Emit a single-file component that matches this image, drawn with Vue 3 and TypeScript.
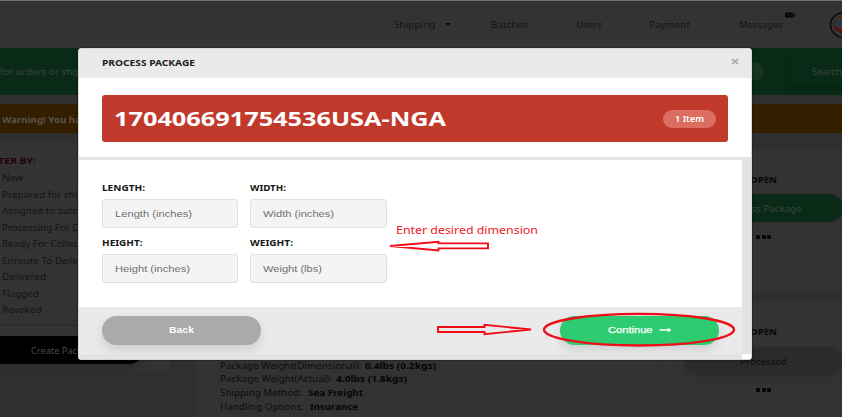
<script setup lang="ts">
import type { Directive } from 'vue'

interface Spec { label: string; labelWidth: number; gap: number; value: string; valueWidth: number }

// Stretches a run of text horizontally to the given advance width.
const vFit: Directive<HTMLElement, number> = {
  mounted(el, binding) {
    const natural = el.getBoundingClientRect().width
    if (!natural) return
    el.style.transform = `scaleX(${binding.value / natural})`
    el.style.marginRight = `${binding.value - natural}px`
  },
}

const filters = [
  { name: 'New', width: 21 },
  { name: 'Prepared for ship', width: 81.5 },
  { name: 'Assigned to batch', width: 81 },
  { name: 'Processing For De', width: 83 },
  { name: 'Ready For Collect', width: 79.5 },
  { name: 'Enroute To Delive', width: 81.5 },
  { name: 'Delivered', width: 44 },
  { name: 'Flagged', width: 37 },
  { name: 'Revoked', width: 40 },
]

const specs: Spec[] = [
  { label: 'Package Weight(Dimensional):', labelWidth: 141, gap: 4, value: '0.4lbs (0.2kgs)', valueWidth: 71 },
  { label: 'Package Weight(Actual):', labelWidth: 112, gap: 4, value: '4.0lbs (1.8kgs)', valueWidth: 71 },
  { label: 'Shipping Method:', labelWidth: 82, gap: 6, value: 'Sea Freight', valueWidth: 55 },
  { label: 'Handling Options:', labelWidth: 84, gap: 6, value: 'Insurance', valueWidth: 48 },
]

const fields = [
  { label: 'LENGTH:', labelWidth: 43, hint: 'Length (inches)', hintWidth: 77 },
  { label: 'WIDTH:', labelWidth: 36, hint: 'Width (inches)', hintWidth: 71 },
  { label: 'HEIGHT:', labelWidth: 40.5, hint: 'Height (inches)', hintWidth: 75 },
  { label: 'WEIGHT:', labelWidth: 43, hint: 'Weight (lbs)', hintWidth: 59 },
]
</script>

<template>
  <div class="screen">
    <header class="nav">
      <span class="nav-item shipping"><span v-fit="41.5" class="t">Shipping</span><i class="caret"></i></span>
      <span class="nav-item batches"><span v-fit="37" class="t">Batches</span></span>
      <span class="nav-item users"><span v-fit="26" class="t">Users</span></span>
      <span class="nav-item payment"><span v-fit="41" class="t">Payment</span></span>
      <span class="nav-item messages">
        <span v-fit="44" class="t">Messages</span>
        <svg class="mail" width="12" height="6" viewBox="0 0 12 6">
          <rect x="0" y="0.5" width="8.5" height="5" rx="0.6" fill="#050505" />
          <path d="M0 1.6 L4.2 3.6 L8.5 1.6" fill="none" stroke="#2c2c2c" stroke-width="0.6" />
          <path d="M10.2 0.7 V4.8" stroke="#111" stroke-width="1" />
        </svg>
      </span>
      <svg class="logo" width="13" height="28" viewBox="0 0 13 28">
        <ellipse cx="16" cy="14" rx="15.5" ry="13" fill="#343434" stroke="#050505" stroke-width="1.3" />
        <path d="M4 15 C5 9 8 5 14 3" fill="none" stroke="#48201f" stroke-width="1" />
        <path d="M4 15 L8 17 L13 20 V23 L7 19.5 L4 18Z" fill="#5c0d10" />
        <text x="6.2" y="14" class="logo-text">W</text>
      </svg>
    </header>

    <section class="searchbar">
      <span class="query"><span v-fit="81" class="t">for orders or ship</span></span>
      <span class="toggle"></span>
      <span class="search-btn"><span v-fit="30" class="t">Search</span></span>
    </section>

    <div class="alert"><span v-fit="79" class="t">Warning! You ha</span></div>

    <main class="columns">
      <aside class="sidebar">
        <div class="filters">
          <h3><span v-fit="53" class="t">FILTER BY:</span></h3>
          <ul>
            <li v-for="f in filters" :key="f.name"><span v-fit="f.width" class="t">{{ f.name }}</span></li>
          </ul>
        </div>
        <div class="create"><span v-fit="67" class="t">Create Package</span></div>
      </aside>
      <section class="detail">
        <p v-for="s in specs" :key="s.label">
          <span v-fit="s.labelWidth" class="t">{{ s.label }}</span>
          <b :style="{ marginLeft: s.gap + 'px' }"><span v-fit="s.valueWidth" class="t">{{ s.value }}</span></b>
        </p>
      </section>
      <aside class="actions">
        <div class="order first">
          <h4><span v-fit="27" class="t">OPEN</span></h4>
          <div class="pill go"><span v-fit="77" class="t">Process Package</span></div>
          <div class="dots"><i></i><i></i><i></i></div>
        </div>
        <div class="order">
          <h4><span v-fit="27" class="t">OPEN</span></h4>
          <div class="pill"><span v-fit="47" class="t">Processed</span></div>
          <div class="dots"><i></i><i></i><i></i></div>
        </div>
      </aside>
    </main>

    <div class="modal">
      <div class="modal-head">
        <span v-fit="93" class="t">PROCESS PACKAGE</span>
        <svg width="8" height="7" viewBox="0 0 8 7"><path d="M1 1 L7 6 M7 1 L1 6" stroke="#b0b0b0" stroke-width="2" /></svg>
      </div>
      <div class="banner-wrap">
        <div class="banner">
          <span v-fit="332" class="t number">170406691754536USA-NGA</span>
          <span class="badge"><span v-fit="29" class="t">1 Item</span></span>
        </div>
      </div>
      <div class="scroll">
        <div class="view">
          <div class="form">
            <label v-for="f in fields" :key="f.label">
              <span class="caption"><span v-fit="f.labelWidth" class="t">{{ f.label }}</span></span>
              <span class="input"><span v-fit="f.hintWidth" class="t">{{ f.hint }}</span></span>
            </label>
          </div>
          <div class="foot">
            <button class="btn back"><span v-fit="25" class="t">Back</span></button>
            <button class="btn next">
              <span v-fit="44.5" class="t">Continue</span>
              <svg width="13" height="6" viewBox="0 0 13 6"><path d="M0.5 3 H10" stroke="#fff" stroke-width="1.3" /><path d="M8.8 0.4 L12.5 3 L8.8 5.6Z" fill="#fff" /></svg>
            </button>
          </div>
        </div>
        <div class="track-y"></div>
        <div class="track-x"></div>
        <div class="corner"></div>
      </div>
    </div>

    <div class="note"><span v-fit="142" class="t">Enter desired dimension</span></div>
    <svg class="marks" width="842" height="417" viewBox="0 0 842 417">
      <g fill="none" stroke="#ef0d18" stroke-width="1.9">
        <path d="M390 246 L438.5 241.7 V243.4 H488 V248.4 H438.5 V250.4 Z" />
        <path d="M531 329.5 L484.5 324.8 V327 H438 V332 H484.5 V334.2 Z" />
        <ellipse cx="639" cy="329.7" rx="95" ry="15.8" stroke-width="2.4" />
      </g>
    </svg>
  </div>
</template>

<style>
body { margin: 0; background: #303030; overflow: hidden; }
</style>

<style scoped>
.screen {
  position: relative;
  width: 842px;
  height: 417px;
  overflow: hidden;
  box-sizing: border-box;
  font: 9.5px/14px "Noto Sans", sans-serif;
  color: #0c0c0c;
  background: #2f2f2f;
  display: flex;
  flex-direction: column;
}
.t { display: inline-block; white-space: nowrap; transform-origin: 0 50%; flex: none; }
h3, h4, p, ul { margin: 0; padding: 0; list-style: none; }

.nav {
  height: 48px;
  flex: none;
  box-sizing: border-box;
  border-top: 1px solid #6d706e;
  background: #333;
  display: flex;
  align-items: center;
  padding-left: 393.5px;
  color: #141414;
}
.nav-item { position: relative; display: flex; align-items: center; flex: none; }
.shipping { width: 97px; }
.batches { width: 85px; }
.users { width: 73.5px; }
.payment { width: 89.5px; }
.messages { width: 91.5px; }
.caret { margin-left: 10px; border: 3px solid transparent; border-top: 3px solid #090909; border-bottom: 0; }
.mail { position: absolute; left: 46px; top: -6px; }
.logo { flex: none; }
.logo-text { font: bold 7px "Liberation Sans", sans-serif; fill: #1d3850; }

.searchbar { height: 47px; flex: none; background: #082a16; display: flex; align-items: center; color: #3b453f; }
.query { width: 740px; flex: none; }
.toggle { width: 24px; height: 17px; border-radius: 9px; background: #17341f; flex: none; }
.search-btn {
  width: 100px; height: 29px; margin-left: 24px; border-radius: 15px;
  display: flex; align-items: center; padding-left: 24px; flex: none; box-sizing: border-box;
  box-shadow: 0 3px 8px rgba(0, 0, 0, .16);
}
.alert {
  height: 29px; margin-top: 9px; flex: none; padding: 2px 0 0 2px; box-sizing: border-box;
  display: flex; align-items: center; background: #331f00; color: #5b5348; font-weight: 700;
}

.columns { display: flex; flex: 1; margin-top: 9px; min-height: 0; }
.sidebar { width: 170px; height: 230px; background: #333; margin-right: 26px; flex: none; }
.filters { height: 184px; padding: 10px 0 0; box-sizing: border-box; border-bottom: 2px solid #2d2d2d; }
h3 { font-size: 9.5px; line-height: 17px; color: #240205; margin-left: -17px; }
li { height: 16.5px; line-height: 17px; padding-left: 2px; color: #141414; }
.create {
  width: 161px; height: 28px; margin: 10px 0 0 -18px; border-radius: 14px; background: #000; color: #4b4b4b;
  display: flex; align-items: center; justify-content: center; padding: 2px 0 0 3px; box-sizing: border-box;
  box-shadow: 0 5px 8px rgba(0, 0, 0, .15);
}
.detail {
  width: 464px; flex: none; box-sizing: border-box; padding: 216.5px 0 0 24px; background: #333; border-right: 1px solid #2f2f2f;
}
.detail p { height: 13.75px; line-height: 13.75px; display: flex; }
.detail b { color: #050505; }
.actions { flex: 1; margin-top: 8px; }
.order { background: #333; height: 145px; padding: 23px 0 0 24px; box-sizing: border-box; }
.order.first { height: 141px; margin-bottom: 11px; }
h4 { font-size: 9.5px; line-height: 14px; padding-left: 66px; color: #060606; }
.pill {
  width: 159px; height: 28px; margin-top: 8px; border-radius: 14px; background: #2b2b2b; color: #0c0c0c;
  display: flex; align-items: center; justify-content: center; padding-top: 2px; box-sizing: border-box;
  box-shadow: 0 4px 8px rgba(0, 0, 0, .08);
}
.pill.go { background: #082a16; color: #3b453f; margin-top: 7px; }
.dots { display: flex; gap: 1.5px; justify-content: center; width: 159px; margin-top: 13px; }
.dots i { width: 4px; height: 3.5px; border-radius: 1px; background: #050505; }

.modal {
  position: absolute; left: 78px; top: 48px; width: 674px; height: 312px; box-sizing: border-box;
  border: 1px solid #d5d8d6; border-radius: 3px; overflow: hidden; background: #fff;
  display: flex; flex-direction: column; box-shadow: 0 0 2px #101010;
}
.modal-head {
  height: 28.5px; flex: none; background: #eaeaea; padding: 0 12px 0 23px; display: flex;
  align-items: center; justify-content: space-between; font-weight: 700; font-size: 9px; color: #222;
}
.modal-head svg { margin-bottom: 3px; }
.banner-wrap { padding: 17.5px 23px 14.5px; border-bottom: 3px solid #e3e3e3; flex: none; }
.banner {
  height: 47px; border-radius: 3px; background: #c0392b; color: #fff; padding: 0 12px;
  display: flex; align-items: center; justify-content: space-between;
}
.number { font-size: 20px; line-height: 27px; font-weight: 700; }
.badge {
  width: 53px; height: 18px; border-radius: 9px; background: #db6d61; font-weight: 600;
  display: flex; align-items: center; justify-content: center;
}
.scroll { flex: 1; display: grid; grid-template: 194px 6px / 1fr 9px; }
.view { display: flex; flex-direction: column; }
.form { flex: 1; padding: 20px 23px 0; display: grid; grid-template: 55px 55px / 136px 137px; column-gap: 12px; align-content: start; }
label { display: flex; flex-direction: column; }
.caption { height: 14px; line-height: 16px; font-size: 9px; font-weight: 700; color: #161616; }
.input {
  height: 29px; margin-top: 5px; box-sizing: border-box; border: 1px solid #e0e0e0; border-radius: 3px;
  background: #f4f4f4; color: #6f6f6f; padding: 1px 0 0 12px; display: flex; align-items: center;
  font-family: "Liberation Sans", sans-serif;
}
.foot { height: 47px; background: #eaeaea; padding: 0 23px; display: flex; align-items: center; justify-content: space-between; }
.btn {
  width: 159px; height: 29px; border: 0; padding: 0; border-radius: 15px; color: #fff;
  font: 700 9.5px/14px "Liberation Sans", sans-serif; box-shadow: 0 5px 10px rgba(50, 50, 80, .14);
  display: flex; align-items: center; justify-content: center;
}
.back { background: #aaa; }
.next { background: #2ecc71; gap: 7px; font-weight: 400; -webkit-text-stroke: .25px #fff; padding-left: 1px; }
.track-y, .track-x { background: #e3e3e3; }
.corner { background: #fff; }

.note { position: absolute; left: 396px; top: 223px; font-size: 11px; color: #f01822; }
.marks { position: absolute; left: 0; top: 0; pointer-events: none; }
</style>
